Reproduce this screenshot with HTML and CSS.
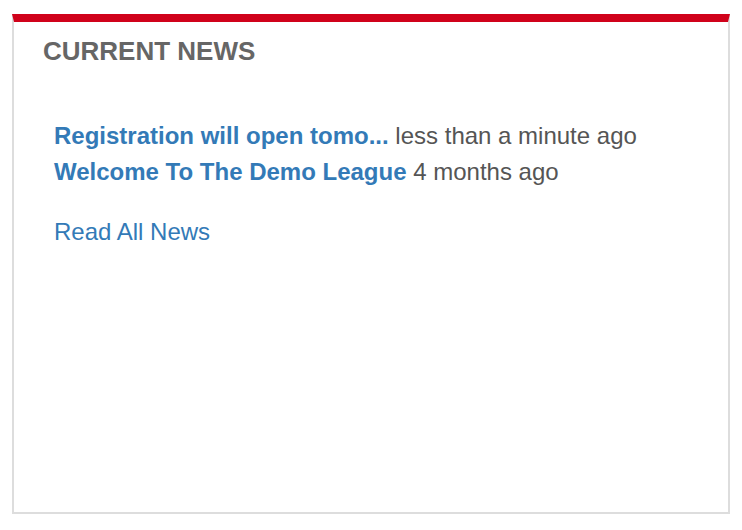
FILE: index.html
```html
<!DOCTYPE html>
<html lang="en">
<head>
  <meta charset="UTF-8" />
  <meta name="viewport" content="width=device-width, initial-scale=1.0"/>
  <title>Current News</title>
  <link rel="stylesheet" href="styles.css">
</head>
<body>

  <div class="news-panel">
    <h2 class="news-title">CURRENT NEWS</h2>

    <ul class="news-list">
      <li>
        <a class="news-link" href="#">Registration will open tomo...</a>
        <span class="news-time">less than a minute ago</span>
      </li>
      <li>
        <a class="news-link" href="#">Welcome To The Demo League</a>
        <span class="news-time">4 months ago</span>
      </li>
    </ul>

    <a class="read-all" href="#">Read All News</a>
  </div>

</body>
</html>
```

FILE: styles.css
```css
* {
  box-sizing: border-box;
}

body {
  font-family: "Liberation Sans", Arial, sans-serif;
  margin: 0;
  padding: 14px 12px 0 12px;
  background-color: #fff;
}

.news-panel {
  height: 500px;
  border: 2px solid #dddddd;
  border-top: 8px solid #d0021b;
  padding: 14px 30px 14px 29px;
}

.news-title {
  margin: 0;
  font-size: 26px;
  font-weight: bold;
  color: #666;
}

.news-list {
  list-style: none;
  margin: 51px 0 24px;
  padding: 0 0 0 11px;
}

.news-list li {
  font-size: 24px;
  line-height: 36px;
  white-space: nowrap;
}

.news-link {
  color: #337ab7;
  font-weight: bold;
  text-decoration: none;
}

.news-time {
  color: #555;
}

.read-all {
  display: inline-block;
  margin-left: 11px;
  font-size: 24px;
  line-height: 36px;
  color: #337ab7;
  text-decoration: none;
}
```
